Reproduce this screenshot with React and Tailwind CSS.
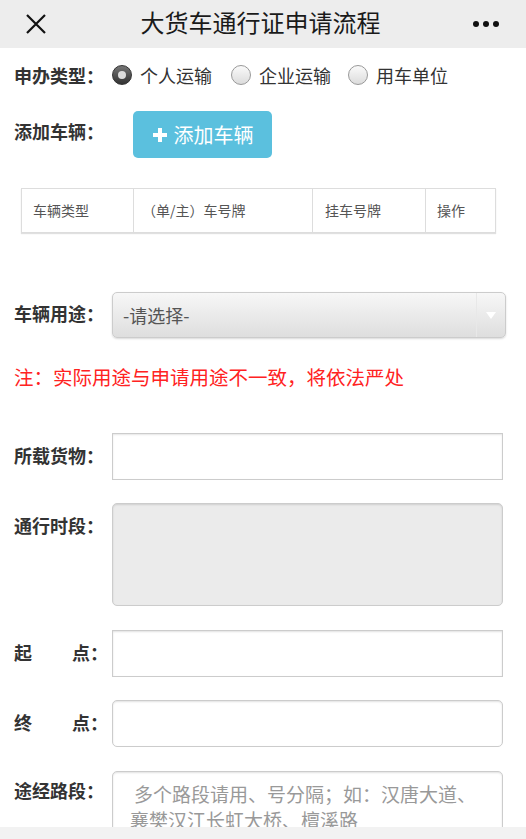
import React from "react";

const font = { fontFamily: '"Noto Sans CJK SC", "Noto Sans", sans-serif' };

function Radio({ checked, className = "" }) {
  if (checked) {
    return (
      <span className={"block w-[20px] h-[20px] rounded-full bg-gradient-to-b from-[#777] to-[#333] border border-[#333] flex items-center justify-center shrink-0 " + className}>
        <span className="block w-[8px] h-[8px] rounded-full bg-[#ddd]" />
      </span>
    );
  }
  return (
    <span className={"block w-[20px] h-[20px] rounded-full bg-gradient-to-b from-[#fafafa] to-[#dcdcdc] border border-[#999] shrink-0 " + className} />
  );
}

function Label({ children, className = "" }) {
  return (
    <div className={"w-[98px] shrink-0 text-[18px] font-bold text-[#333] leading-[24px] " + className}>
      {children}
    </div>
  );
}

export default function App() {
  return (
    <div style={font} className="w-[526px] h-[839px] bg-white flex flex-col overflow-hidden">
      {/* Header */}
      <div className="h-[48px] bg-[#ededed] flex items-center px-[24px] shrink-0">
        <svg width="24" height="24" viewBox="0 0 24 24" className="shrink-0">
          <path d="M3 3 L21 21 M21 3 L3 21" stroke="#111" strokeWidth="2.2" fill="none" />
        </svg>
        <div className="flex-1 text-center text-[24px] text-[#1a1a1a] leading-[32px] -mt-[4px]">大货车通行证申请流程</div>
        <div className="flex gap-[4px] items-center pr-[3px]">
          <span className="block w-[6px] h-[6px] rounded-full bg-[#111]" />
          <span className="block w-[6px] h-[6px] rounded-full bg-[#111]" />
          <span className="block w-[6px] h-[6px] rounded-full bg-[#111]" />
        </div>
      </div>

      <div className="flex-1 overflow-hidden pl-[14px] pr-[20px]">
        {/* Row 1 */}
        <div className="mt-[12px] h-[30px] flex items-center">
          <div className="text-[18px] font-bold text-[#333] w-[98px] shrink-0">申办类型：</div>
          <Radio checked />
          <span className="ml-[8px] text-[18px] text-[#333]">个人运输</span>
          <Radio className="ml-[19px]" />
          <span className="ml-[8px] text-[18px] text-[#333]">企业运输</span>
          <Radio className="ml-[17px]" />
          <span className="ml-[8px] text-[18px] text-[#333]">用车单位</span>
        </div>

        {/* Row 2 */}
        <div className="mt-[21px] flex items-center">
          <div className="text-[18px] font-bold text-[#333] w-[119px] shrink-0 -mt-[6px]">添加车辆：</div>
          <div className="w-[139px] h-[47px] rounded-[5px] bg-[#5bc0de] flex items-center justify-center gap-[6px] text-white text-[20px]">
            <svg width="16" height="16" viewBox="0 0 16 16">
              <path d="M8 1 V15 M1 8 H15" stroke="#fff" strokeWidth="4" />
            </svg>
            <span>添加车辆</span>
          </div>
        </div>

        {/* Table */}
        <div className="mt-[30px] ml-[7px] w-[475px] h-[45px] border border-[#ddd] shadow-[0_1px_1px_rgba(0,0,0,0.12)] flex text-[14px] text-[#555]">
          <div className="w-[112px] border-r border-[#ddd] flex items-center pl-[11px]">车辆类型</div>
          <div className="w-[179px] border-r border-[#ddd] flex items-center pl-[8px]">（单/主）车号牌</div>
          <div className="w-[113px] border-r border-[#ddd] flex items-center pl-[12px]">挂车号牌</div>
          <div className="flex-1 flex items-center pl-[11px]">操作</div>
        </div>

        {/* Select */}
        <div className="mt-[59px] flex items-center">
          <Label className="-mt-[4px]">车辆用途：</Label>
          <div className="w-[394px] h-[46px] rounded-[5px] border border-[#ccc] bg-gradient-to-b from-[#f7f7f7] to-[#dedede] shadow-[0_1px_2px_rgba(0,0,0,0.15)] flex items-center">
            <span className="flex-1 pl-[10px] text-[18px] text-[#555]">-请选择-</span>
            <div className="w-[29px] h-full border-l border-[#e8e8e8] flex items-center justify-center">
              <svg width="10" height="7" viewBox="0 0 10 7">
                <path d="M0 0 H10 L5 7 Z" fill="#fff" />
              </svg>
            </div>
          </div>
        </div>

        {/* Note */}
        <div className="mt-[27px] text-[19.5px] leading-[24px] text-[#f22]">注：实际用途与申请用途不一致，将依法严处</div>

        {/* 所载货物 */}
        <div className="mt-[44px] flex items-center">
          <Label className="-mt-[4px]">所载货物：</Label>
          <div className="w-[391px] h-[47px] border border-[#ccc] shadow-[inset_0_1px_2px_rgba(0,0,0,0.1)] bg-white" />
        </div>

        {/* 通行时段 */}
        <div className="mt-[23px] flex items-start">
          <Label className="mt-[10px]">通行时段：</Label>
          <div className="w-[391px] h-[103px] rounded-[5px] border border-[#ccc] bg-[#ebebeb] shadow-[inset_0_1px_2px_rgba(0,0,0,0.12)]" />
        </div>

        {/* 起点 */}
        <div className="mt-[24px] flex items-center">
          <Label className="-mt-[4px] flex justify-between pr-[4px]"><span>起</span><span>点：</span></Label>
          <div className="w-[391px] h-[47px] border border-[#ccc] shadow-[inset_0_1px_2px_rgba(0,0,0,0.12)] bg-white" />
        </div>

        {/* 终点 */}
        <div className="mt-[23px] flex items-center">
          <Label className="-mt-[4px] flex justify-between pr-[4px]"><span>终</span><span>点：</span></Label>
          <div className="w-[391px] h-[47px] rounded-[5px] border border-[#ccc] shadow-[inset_0_1px_2px_rgba(0,0,0,0.12)] bg-white" />
        </div>

        {/* 途经路段 */}
        <div className="mt-[24px] flex items-start">
          <Label className="mt-[7px]">途经路段：</Label>
          <div className="w-[391px] h-[90px] rounded-[5px] border border-[#ccc] shadow-[inset_0_1px_2px_rgba(0,0,0,0.12)] bg-white pt-[9px] pl-[21px] pr-[6px] text-[19px] leading-[26px] text-[#999] whitespace-nowrap">
            <div>多个路段请用、号分隔；如：汉唐大道、</div>
            <div className="-ml-[4px]">襄樊汉江长虹大桥、檀溪路</div>
          </div>
        </div>
      </div>

      <div className="h-[12px] bg-[#f2f2f2] shrink-0" />
    </div>
  );
}
